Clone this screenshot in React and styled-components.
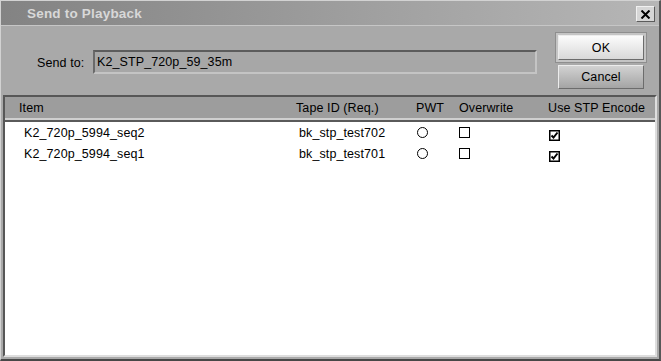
import React from "react";
import styled, { createGlobalStyle } from "styled-components";

const Global = createGlobalStyle`
  html, body {
    margin: 0;
    padding: 0;
    background: #a9a9a9;
  }
  body {
    font-family: "Liberation Sans", Arial, sans-serif;
    font-size: 12.5px;
    letter-spacing: 0.1px;
    color: #000;
  }
`;

const Window = styled.div`
  width: 661px;
  height: 361px;
  box-sizing: border-box;
  display: flex;
  flex-direction: column;
  background: #a9a9a9;
  border-top: 1px solid #d2d2d2;
  border-left: 1px solid #d2d2d2;
  border-right: 2px solid #575757;
  border-bottom: 2px solid #474747;
`;

const TitleBar = styled.div`
  height: 24px;
  flex: none;
  display: flex;
  align-items: center;
  justify-content: space-between;
  padding: 0 4px 0 26px;
  background: linear-gradient(to right, #838383, #b6b6b6);
  border-bottom: 1px solid #c6c6c6;
`;

const Title = styled.span`
  font-size: 13.5px;
  font-weight: bold;
  color: #d8d8d8;
  letter-spacing: 0.2px;
`;

const CloseButton = styled.div`
  width: 17px;
  height: 14px;
  margin-top: 2px;
  display: flex;
  align-items: center;
  justify-content: center;
  background: #d6d6d6;
  border-top: 1px solid #f0f0f0;
  border-left: 1px solid #f0f0f0;
  border-right: 1px solid #5c5c5c;
  border-bottom: 1px solid #5c5c5c;
`;

const TopSection = styled.div`
  height: 69px;
  flex: none;
  display: flex;
  padding: 6px 12px 0 36px;
  box-sizing: border-box;
`;

const Label = styled.span`
  width: 56px;
  margin-top: 24px;
  flex: none;
`;

const Field = styled.div`
  width: 444px;
  height: 24px;
  margin-top: 18px;
  box-sizing: border-box;
  display: flex;
  align-items: center;
  padding-left: 2px;
  background: #a7a7a7;
  border-top: 2px solid #5c5c5c;
  border-left: 2px solid #6a6a6a;
  border-right: 2px solid #c4c4c4;
  border-bottom: 2px solid #c4c4c4;
`;

const Buttons = styled.div`
  margin-left: auto;
  display: flex;
  flex-direction: column;
  align-items: center;
  gap: 2px;
`;

const DefaultFrame = styled.div`
  width: 92px;
  height: 31px;
  box-sizing: border-box;
  padding: 2px;
  background: #c4c4c4;
  border: 1px solid #8e8e8e;
`;

const Button = styled.div`
  width: ${p => (p.$primary ? "100%" : "86px")};
  height: ${p => (p.$primary ? "100%" : "24px")};
  box-sizing: border-box;
  display: flex;
  align-items: center;
  justify-content: center;
  background: ${p =>
    p.$primary
      ? "linear-gradient(#fbfbfb, #d9d9d9)"
      : "linear-gradient(#d2d2d2, #a4a4a4)"};
  border-top: 1px solid #ececec;
  border-left: 1px solid #ececec;
  border-right: 1px solid #6c6c6c;
  border-bottom: 1px solid #6c6c6c;
`;

const Table = styled.div`
  flex: 1;
  margin: 0 2px 2px 2px;
  display: flex;
  flex-direction: column;
  border-top: 2px solid #575757;
  border-left: 2px solid #575757;
  border-right: 2px solid #dedede;
  border-bottom: 2px solid #dedede;
`;

const HeaderRow = styled.div`
  height: 21px;
  flex: none;
  display: grid;
  grid-template-columns: 277px 120px 43px 89px 1fr;
  align-items: center;
  padding-left: 14px;
  background: #9d9d9d;
  border-bottom: 2px solid #cfcfcf;
`;

const List = styled.div`
  flex: 1;
  background: #fff;
  border-top: 2px solid #5a5a5a;
`;

const Row = styled.div`
  height: 21px;
  display: grid;
  grid-template-columns: 275px 118px 42px 90px 1fr;
  align-items: center;
  padding-left: 19px;
`;

const Radio = styled.span`
  width: 9px;
  height: 9px;
  border: 1px solid #000;
  border-radius: 50%;
  background: #fff;
`;

const Box = styled.span`
  width: 9px;
  height: 9px;
  border: 1px solid #000;
  background: #fff;
`;

const Checked = styled.svg`
  margin-top: 5px;
`;

const CheckedBox = () => (
  <Checked width="11" height="11" viewBox="0 0 11 11">
    <rect x="0.5" y="0.5" width="10" height="10" fill="#fff" stroke="#000" />
    <rect x="1" y="1" width="9" height="9" fill="none" stroke="#000" strokeWidth="1" />
    <path d="M2.5 5.5 L4.5 7.5 L8.5 2.5" fill="none" stroke="#000" strokeWidth="2" />
  </Checked>
);

const rows = [
  { item: "K2_720p_5994_seq2", tape: "bk_stp_test702" },
  { item: "K2_720p_5994_seq1", tape: "bk_stp_test701" }
];

export default function App() {
  return (
    <>
      <Global />
      <Window>
        <TitleBar>
          <Title>Send to Playback</Title>
          <CloseButton>
            <svg width="11" height="9" viewBox="0 0 11 9">
              <path d="M1.5 0.5 L9.5 8.5 M9.5 0.5 L1.5 8.5" stroke="#000" strokeWidth="2" />
            </svg>
          </CloseButton>
        </TitleBar>
        <TopSection>
          <Label>Send to:</Label>
          <Field>K2_STP_720p_59_35m</Field>
          <Buttons>
            <DefaultFrame>
              <Button $primary>OK</Button>
            </DefaultFrame>
            <Button>Cancel</Button>
          </Buttons>
        </TopSection>
        <Table>
          <HeaderRow>
            <span>Item</span>
            <span>Tape ID (Req.)</span>
            <span>PWT</span>
            <span>Overwrite</span>
            <span>Use STP Encode</span>
          </HeaderRow>
          <List>
            {rows.map(r => (
              <Row key={r.item}>
                <span>{r.item}</span>
                <span>{r.tape}</span>
                <Radio />
                <Box />
                <CheckedBox />
              </Row>
            ))}
          </List>
        </Table>
      </Window>
    </>
  );
}
